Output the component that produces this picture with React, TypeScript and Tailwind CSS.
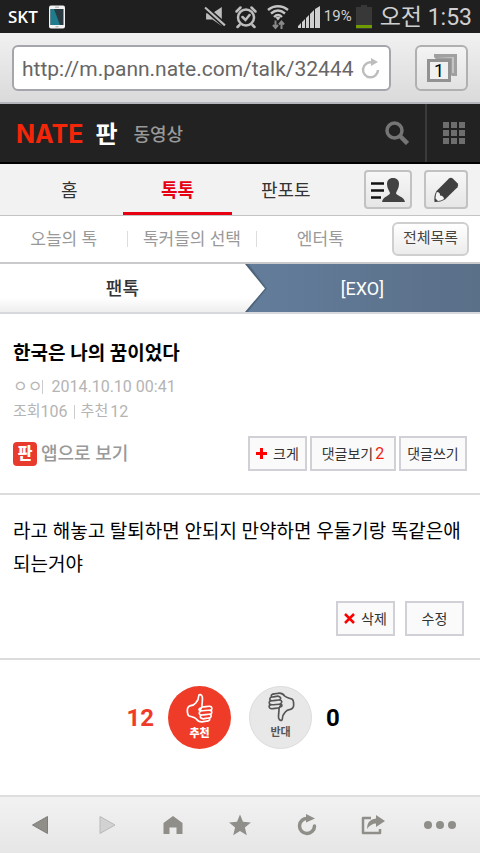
import React from 'react';

const tabs = [
  { label: '홈', active: false },
  { label: '톡톡', active: true },
  { label: '판포토', active: false },
];

const subTabs = ['오늘의 톡', '톡커들의 선택', '엔터톡'];

const outlineButton =
  'flex h-[35px] items-center justify-center border-2 border-[#d0d0d6] bg-[#fafafa] text-sm text-[#333]';

const greyButton =
  'flex items-center justify-center rounded border-2 border-[#c2c2c2] bg-linear-to-b from-[#f7f7f7] to-[#e6e6e6]';

const ThumbIcon = ({ className }: { className?: string }) => (
  <svg
    viewBox="0 0 84 94"
    className={className}
    fill="none"
    stroke="currentColor"
    strokeWidth="5"
    strokeLinecap="round"
    strokeLinejoin="round"
  >
    <path d="M43 52 C45 48 48 46 48 43 C47 34 51 24 49 14 C47 6 39 4 38 11 C38 19 36 25 30 31 C26 36 22 39 14 40 C7 42 4 46 4 54 C4 62 4 67 8 70 C16 74 25 74 31 80 C36 87 43 90 52 88 L65 86" />
    <path d="M48 44 C56 45 64 41 72 42 C79 43 80 52 73 54 C79 56 79 65 72 66 C78 69 76 76 70 77 C73 81 70 86 64 86" />
    <path d="M73 54 C62 53 52 56 43 55 C37 54 38 48 44 47" />
    <path d="M72 66 C63 65 54 69 46 68 C38 67 38 59 44 57" />
    <path d="M70 77 C62 76 56 81 49 79 C42 77 41 71 46 69" />
  </svg>
);

const StatusBar = () => (
  <div className="flex h-[33px] items-center bg-[#1f1f1f] px-2 text-[#d0d0d0]">
    <span className="font-['Open_Sans',sans-serif] text-[17px] font-semibold text-white">SKT</span>
    <svg viewBox="0 0 18 24" className="ml-2.5 h-6 w-[18px]">
      <rect x="1" y="0.5" width="16" height="23" rx="2" fill="#f2f2f2" />
      <rect x="2.500" y="4" width="13" height="16" fill="#2b3a40" />
      <path d="M2.500 4 L6 4 L12 20 L2.500 20 Z" fill="#1e7c8d" />
      <path d="M7 2.200h4M7.500 21.800h3" stroke="#aaa" />
    </svg>
    <div className="ml-auto flex items-center">
      <svg viewBox="0 0 21 20" className="h-[22px] w-[22px]">
        <path d="M2 6.500h6l9-6v18l-9-6H2z" fill="#bdbdbd" />
        <path d="M1 1 L20 18" stroke="#1f1f1f" strokeWidth="5" />
        <path d="M1 1 L20 18" stroke="#bdbdbd" strokeWidth="2" />
      </svg>
      <svg
        viewBox="0 0 24 24"
        className="ml-2 h-6 w-6"
        fill="none"
        stroke="#bdbdbd"
        strokeWidth="2.500"
        strokeLinecap="round"
      >
        <circle cx="12" cy="12.500" r="8" />
        <path d="M8.500 12l3 3 4-5M2.500 6.500l4-4M21.500 6.500l-4-4M5.500 20l-2 2M18.500 20l2 2" />
      </svg>
      <svg viewBox="0 0 24 26" className="ml-2 h-[26px] w-6" fill="none" stroke="#c4c4c4">
        <path d="M2 6c6-5 14-5 20 0M5 9.500c4.500-4 9.500-4 14 0M8 13c2.500-2.500 5.500-2.500 8 0" strokeWidth="2.400" />
        <path d="M12 16.500l-2.500-3q2.500-1.600 5 0z" fill="#c4c4c4" stroke="none" />
        <path d="M9.500 16.500v7M7 21l2.500 3 2.500-3M15.500 25v-7M13 20.500l2.500-3 2.500 3" stroke="#8a8a8a" strokeWidth="2" />
      </svg>
      <svg viewBox="0 0 22 22" className="ml-2 h-[22px] w-[22px]" fill="#cfcfcf">
        <path d="M0 22v-2l3-3v5zM4 22v-6l3-3v9zM8 22V12l3-3v13zM12 22V8l4-4v18zM17 22V3l5-3v22z" />
      </svg>
      <span className="ml-1 text-[15px]">19%</span>
      <svg viewBox="0 0 16 24" className="ml-1 h-6 w-4">
        <path d="M5 0h6v2h5v22H0V2h5z" fill="#383838" />
        <rect y="20" width="16" height="3" fill="#6f9c00" />
      </svg>
      <span className="ml-2 pt-0.5 text-[23px] leading-7">오전 1:53</span>
    </div>
  </div>
);

const AddressBar = () => (
  <div className="flex h-[71px] items-center gap-6 border-b-2 border-[#b5b5bd] bg-linear-to-b from-[#f1f1f1] to-[#dadada] px-3">
    <div className="flex h-[46px] min-w-0 flex-1 items-center rounded-md border-2 border-[#a5a5ad] bg-white px-2">
      <input
        type="text"
        aria-label="주소"
        defaultValue="http://m.pann.nate.com/talk/32444"
        className="min-w-0 flex-1 bg-transparent pt-1 text-[21px] text-[#666] outline-none"
      />
      <button type="button" aria-label="새로고침" className="ml-1.5">
        <svg viewBox="0 0 20 22" className="h-[22px] w-5" fill="none" stroke="#bdbdbd" strokeWidth="2.500">
          <path d="M11 5.500 A7.500 7.500 0 1 0 17 13" />
          <path d="M10 1l7 4-7 4z" fill="#bdbdbd" stroke="none" />
        </svg>
      </button>
    </div>
    <button
      type="button"
      aria-label="탭"
      className="flex h-[46px] w-[53px] shrink-0 items-center justify-center rounded-md border-2 border-[#b0b0b0] bg-linear-to-b from-[#f4f4f4] to-[#e2e2e2]"
    >
      <svg viewBox="0 0 30 28" className="h-7 w-[30px]">
        <path d="M7 3V0h23v22h-5" fill="#a0a0a0" />
        <path d="M9 3h18v16h-2V4z" fill="#c4c4c4" />
        <rect x="1.500" y="6.500" width="21" height="20" fill="#f0f0f0" stroke="#929292" strokeWidth="3" />
        <text x="12" y="22.500" textAnchor="middle" fontSize="18" fill="#000">
          1
        </text>
      </svg>
    </button>
  </div>
);

const SiteHeader = () => (
  <header className="flex h-[60px] items-stretch border-b-2 border-black bg-[#222]">
    <div className="flex flex-1 items-center pt-1 pl-4">
      <a href="#nate" className="font-['Inter',sans-serif] text-[25px] font-bold text-[#f4260a]">
        NATE
      </a>
      <a href="#pann" className="ml-3 text-2xl font-bold text-white">판</a>
      <a href="#video" className="ml-4 text-lg font-medium text-[#999]">동영상</a>
    </div>
    <button type="button" aria-label="검색" className="flex w-14 items-center justify-center">
      <svg viewBox="0 0 24 24" className="h-6 w-6" fill="none" stroke="#757575">
        <circle cx="9.500" cy="9.500" r="7.500" strokeWidth="3.500" />
        <path d="M15 15l7.500 7.500" strokeWidth="4.500" />
      </svg>
    </button>
    <button
      type="button"
      aria-label="전체 메뉴"
      className="flex w-[55px] items-center justify-center border-l-2 border-[#3a3a3a]"
    >
      <span className="grid grid-cols-3 gap-0.5">
        {Array.from({ length: 9 }).map((_, i) => (
          <span key={i} className="size-1.5 bg-[#6e6e6e]" />
        ))}
      </span>
    </button>
  </header>
);

const MainTabs = () => (
  <nav className="flex h-[52px] items-center border-b border-[#c4c4c4] bg-[#f2f2f2] pr-3 pl-[15px]">
    <div className="flex flex-1 self-stretch">
      {tabs.map((tab) => (
        <a
          key={tab.label}
          href="#tab"
          className={`flex flex-1 items-center justify-center border-b-3 pt-1.5 text-lg ${
            tab.active ? 'border-[#e60012] font-bold text-[#e60012]' : 'border-transparent text-[#333]'
          }`}
        >
          {tab.label}
        </a>
      ))}
    </div>
    <button type="button" aria-label="내 정보" className={`${greyButton} ml-6 h-[39px] w-12`}>
      <svg viewBox="0 0 36 26" className="h-[26px] w-9">
        <path d="M1 6.500h13M1 13.500h13M1 20.500h10" stroke="#111" strokeWidth="2.500" />
        <path
          d="M23 1c4 0 6 2.500 6 6 0 4-2 6-3 9 0 3 8 3 9 9H12c1-6 8-6 8-9-1-3-3-5-3-9 0-3.500 2-6 6-6z"
          fill="#424242"
        />
      </svg>
    </button>
    <button type="button" aria-label="글쓰기" className={`${greyButton} ml-3 h-[39px] w-11`}>
      <svg viewBox="0 0 26 26" className="h-[26px] w-[26px]">
        <path d="M16 1.500q2-1.500 4 .3l4.500 4.400q1.500 2 0 4L12 22.500q-4 2.500-10.500 2.500Q.8 18 3.500 14z" fill="#404040" />
        <path d="M3.800 15q3.500.2 3.200 3.400 3.600 0 4 3.600-3 2-6 2L2.500 21.500q0-3.500 1.300-6.500z" fill="#f4f4f4" />
      </svg>
    </button>
  </nav>
);

const SubTabs = () => (
  <nav className="flex h-12 items-center border-b-2 border-[#c9c9cb] bg-white pr-[11px]">
    {subTabs.map((label, i) => (
      <a
        key={label}
        href="#sub"
        className={`flex h-4 flex-1 items-center justify-center pt-0.5 text-[17px] whitespace-nowrap text-[#999] ${
          i < subTabs.length - 1 ? 'border-r border-[#ddd]' : ''
        }`}
      >
        {label}
      </a>
    ))}
    <button
      type="button"
      className="ml-2 flex h-[34px] w-[77px] shrink-0 items-center justify-center rounded-md border-2 border-[#cfcfcf] bg-linear-to-b from-white to-[#ececec] pb-0.5 text-[15px] text-[#444]"
    >
      전체목록
    </button>
  </nav>
);

const Breadcrumb = () => (
  <div className="flex h-[50px] border-b-2 border-[#d6d8dd] text-lg">
    <a
      href="#fan"
      className="relative flex w-[51%] items-center justify-center bg-linear-to-b from-white from-70% to-[#eee] pt-0.5 font-medium text-[#333]"
    >
      팬톡
      <svg viewBox="0 0 24 48" preserveAspectRatio="none" className="absolute top-0 left-full h-full w-6">
        <defs>
          <linearGradient id="arrowFill" x1="0" y1="0" x2="0" y2="1">
            <stop offset="0.7" stopColor="#fff" />
            <stop offset="1" stopColor="#eee" />
          </linearGradient>
        </defs>
        <path d="M0 0h4l18 24.500L3 48H0z" fill="#3f5268" opacity="0.35" />
        <path d="M0 0h2l19 24.500L2 48H0z" fill="#3f5268" opacity="0.5" />
        <path d="M0 0l20 24.500L0 48z" fill="url(#arrowFill)" />
      </svg>
    </a>
    <a
      href="#exo"
      className="flex flex-1 items-center justify-center bg-linear-to-r from-[#637d9b] to-[#5a6f88] pt-0.5 text-white"
    >
      [EXO]
    </a>
  </div>
);

const Article = () => (
  <article>
    <div className="border-b-2 border-[#dcdcdc] px-[13px] pt-[26px] pb-[22px]">
      <h1 className="text-[19px] leading-7 font-bold text-black">한국은 나의 꿈이었다</h1>
      <div className="mt-1.5 text-base leading-[25px] text-[#b4b4b4]">
        <p className="flex items-center">
          <span>ㅇㅇ</span>
          <span className="h-[14px] w-px bg-[#ccc]" />
          <span className="ml-2">2014.10.10 00:41</span>
        </p>
        <p className="flex items-center">
          <span className="text-[15px]">조회</span>106
          <span className="mx-1.5 h-[14px] w-px bg-[#ccc]" />
          <span className="mr-0.5 text-[15px]">추천</span>12
        </p>
      </div>
      <div className="mt-3 flex items-center gap-[3px]">
        <a href="#app" className="mr-auto flex items-center gap-1 text-lg font-medium text-[#999]">
          <span className="flex size-6 items-center justify-center rounded bg-[#e83b2e] text-base font-black text-white">
            판
          </span>
          앱으로 보기
        </a>
        <button type="button" className={`${outlineButton} w-[59px] gap-1.5`}>
          <svg viewBox="0 0 11 11" className="h-[11px] w-[11px]" stroke="#f00" strokeWidth="3">
            <path d="M5.500 0v11M0 5.500h11" />
          </svg>
          크게
        </button>
        <button type="button" className={`${outlineButton} w-[86px]`}>
          댓글보기<span className="ml-0.5 text-base text-[#f21d0d]">2</span>
        </button>
        <button type="button" className={`${outlineButton} w-[68px]`}>
          댓글쓰기
        </button>
      </div>
    </div>

    <div className="border-b-2 border-[#dcdcdc] px-[13px] pt-5 pb-[22px]">
      <p className="text-[19px] leading-[33px] text-black">
        라고 해놓고 탈퇴하면 안되지 만약하면 우둘기랑 똑같은애 되는거야
      </p>
      <div className="mt-5 flex justify-end gap-2.5 pr-[3px]">
        <button type="button" className={`${outlineButton} w-[59px] gap-1.5`}>
          <svg viewBox="0 0 11 11" className="h-[11px] w-[11px]" stroke="#f00" strokeWidth="2.500">
            <path d="M1 1l9 9M10 1l-9 9" />
          </svg>
          삭제
        </button>
        <button type="button" className={`${outlineButton} w-[59px]`}>
          수정
        </button>
      </div>
    </div>
  </article>
);

const Votes = () => (
  <div className="grid grid-cols-[1fr_auto_auto_1fr] items-center py-[26px] text-2xl font-bold">
    <span className="mr-3.5 text-right text-[#ee3c28]">12</span>
    <button
      type="button"
      className="mr-[18px] flex size-[63px] flex-col items-center rounded-full bg-[#ee3c28] pt-1.5 text-[11px] leading-5 font-black text-white"
    >
      <ThumbIcon className="h-8 w-7" />
      추천
    </button>
    <button
      type="button"
      className="flex size-[63px] flex-col items-center rounded-full border border-[#dcdcdc] bg-[#e8e8e8] pt-1 text-[11px] leading-5 font-bold text-[#555]"
    >
      <ThumbIcon className="h-8 w-7 rotate-180" />
      반대
    </button>
    <span className="ml-3.5 text-black">0</span>
  </div>
);

const toolbar = [
  {
    label: '뒤로',
    icon: <path d="M19.500 3.500v17L4.500 12z" fill="#8f8e89" stroke="#7f7e7a" />,
  },
  {
    label: '앞으로',
    icon: <path d="M5 3.500v17L20 12z" fill="#d2d2d2" stroke="#b9b9b9" />,
  },
  {
    label: '홈으로',
    icon: <path d="M12 3l9.500 7v11h-6v-6.500h-7V21h-6V10z" fill="#8f8e89" />,
  },
  {
    label: '즐겨찾기',
    icon: <path d="M12 1.500l3 7.300 7.900.6-6 5.100 1.900 7.700L12 18l-6.800 4.200 1.900-7.700-6-5.100 7.900-.6z" fill="#8f8e89" />,
  },
  {
    label: '새로고침',
    icon: (
      <>
        <path d="M12.500 5.500 A7.500 7.500 0 1 0 19.500 13" fill="none" stroke="#8f8e89" strokeWidth="3.500" strokeLinecap="round" />
        <path d="M11 1l9 4.500-9 4z" fill="#8f8e89" />
      </>
    ),
  },
  {
    label: '공유',
    icon: (
      <>
        <path d="M10 5H2v15h17v-4" fill="none" stroke="#8f8e89" strokeWidth="2.500" strokeLinejoin="round" />
        <path d="M15 2l9 6-9 6v-3.500q-5 0-9 5.500 0-9.500 9-10.500z" fill="#8f8e89" />
      </>
    ),
  },
];

const BottomToolbar = () => (
  <nav className="mt-auto flex h-[58px] items-center border-t-2 border-[#dedede] bg-linear-to-b from-[#f2f2f2] to-[#e6e6e6] px-[7px]">
    {toolbar.map((item) => (
      <button key={item.label} type="button" aria-label={item.label} className="flex flex-1 justify-center">
        <svg viewBox="0 0 24 24" className="size-6 overflow-visible">
          {item.icon}
        </svg>
      </button>
    ))}
    <button type="button" aria-label="더보기" className="flex flex-1 justify-center gap-1">
      <span className="size-2 rounded-full bg-[#8f8e89]" />
      <span className="size-2 rounded-full bg-[#8f8e89]" />
      <span className="size-2 rounded-full bg-[#8f8e89]" />
    </button>
  </nav>
);

const App = () => {
  return (
    <div className="flex min-h-screen flex-col bg-white font-['Roboto','Noto_Sans_CJK_KR',sans-serif]">
      <StatusBar />
      <AddressBar />
      <SiteHeader />
      <MainTabs />
      <SubTabs />
      <Breadcrumb />
      <Article />
      <Votes />
      <BottomToolbar />
    </div>
  );
};

export default App;
